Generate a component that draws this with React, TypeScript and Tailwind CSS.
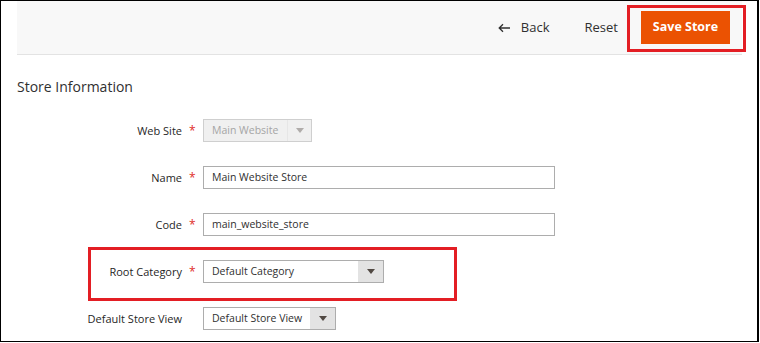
import React from "react";

const font = { fontFamily: '"Open Sans", "Liberation Sans", sans-serif' };

function Caret() {
  return (
    <svg width="8" height="5" viewBox="0 0 8 5">
      <path d="M0 0h8L4 5z" fill="#514943" />
    </svg>
  );
}

function Row({
  label,
  required,
  children,
}: {
  label: string;
  required?: boolean;
  children: React.ReactNode;
}) {
  return (
    <div className="flex items-center h-[23px]">
      <div className="w-[181px] text-right text-[11px] text-[#1f1f1f] leading-none whitespace-nowrap">
        {label}
      </div>
      <div className="w-[21px] pl-[7px] text-[12px] text-[#e02b27] leading-none">
        {required ? "*" : ""}
      </div>
      {children}
    </div>
  );
}

export default function App() {
  return (
    <div
      className="relative w-[759px] h-[342px] bg-white border-l border-t border-b border-r-2 border-black overflow-hidden"
      style={font}
    >
      {/* Page actions */}
      <div className="ml-[16px] w-[725px] h-[54px] bg-[#f8f8f8] border-b border-[#e3e3e3] flex items-center justify-end pr-[12px]">
        <button className="flex items-center text-[13px] text-[#303030] mr-[35px]">
          <svg width="13" height="10" viewBox="0 0 13 10" className="mr-[10px]">
            <path d="M12 5H1.5M5 1.2L1.2 5 5 8.8" fill="none" stroke="#303030" strokeWidth="1.3" />
          </svg>
          Back
        </button>
        <button className="text-[13px] text-[#303030] mr-[23px]">Reset</button>
        <button className="h-[33px] w-[89px] bg-[#eb5202] text-white text-[12.5px] font-bold">
          Save Store
        </button>
      </div>

      {/* Form */}
      <div className="pl-[16px] pt-[25px] text-[14px] text-[#303030] leading-none">
        Store Information
      </div>

      <div className="flex flex-col gap-[24px] mt-[25px]">
        <Row label="Web Site" required>
          <div className="flex h-[23px] w-[109px] bg-[#f0f0f0] border border-[#cfcfcf]">
            <div className="flex-1 flex items-center pl-[8px] text-[10.5px] text-[#a5a5a5] whitespace-nowrap">
              Main Website
            </div>
            <div className="w-[24px] border-l border-[#d9d9d9] flex items-center justify-center opacity-40">
              <Caret />
            </div>
          </div>
        </Row>
        <Row label="Name" required>
          <div className="flex items-center h-[23px] w-[352px] border border-[#adadad] pl-[8px] text-[10.5px] text-[#303030]">
            Main Website Store
          </div>
        </Row>
        <Row label="Code" required>
          <div className="flex items-center h-[23px] w-[352px] border border-[#adadad] pl-[8px] text-[10.5px] text-[#303030]">
            main_website_store
          </div>
        </Row>
        <Row label="Root Category" required>
          <div className="flex h-[23px] w-[181px] border border-[#adadad]">
            <div className="flex-1 flex items-center pl-[8px] text-[10.5px] text-[#303030] whitespace-nowrap">
              Default Category
            </div>
            <div className="w-[25px] bg-[#e3e3e3] flex items-center justify-center">
              <Caret />
            </div>
          </div>
        </Row>
        <Row label="Default Store View">
          <div className="flex h-[23px] w-[133px] border border-[#adadad]">
            <div className="flex-1 flex items-center pl-[8px] text-[10.5px] text-[#303030] whitespace-nowrap">
              Default Store View
            </div>
            <div className="w-[25px] bg-[#e3e3e3] flex items-center justify-center">
              <Caret />
            </div>
          </div>
        </Row>
      </div>

      {/* annotation boxes */}
      <div className="absolute left-[626px] top-[4px] w-[119px] h-[47px] border-[3px] border-[#e31e24]" />
      <div className="absolute left-[87px] top-[246px] w-[369px] h-[54px] border-[3px] border-[#e31e24]" />
    </div>
  );
}
